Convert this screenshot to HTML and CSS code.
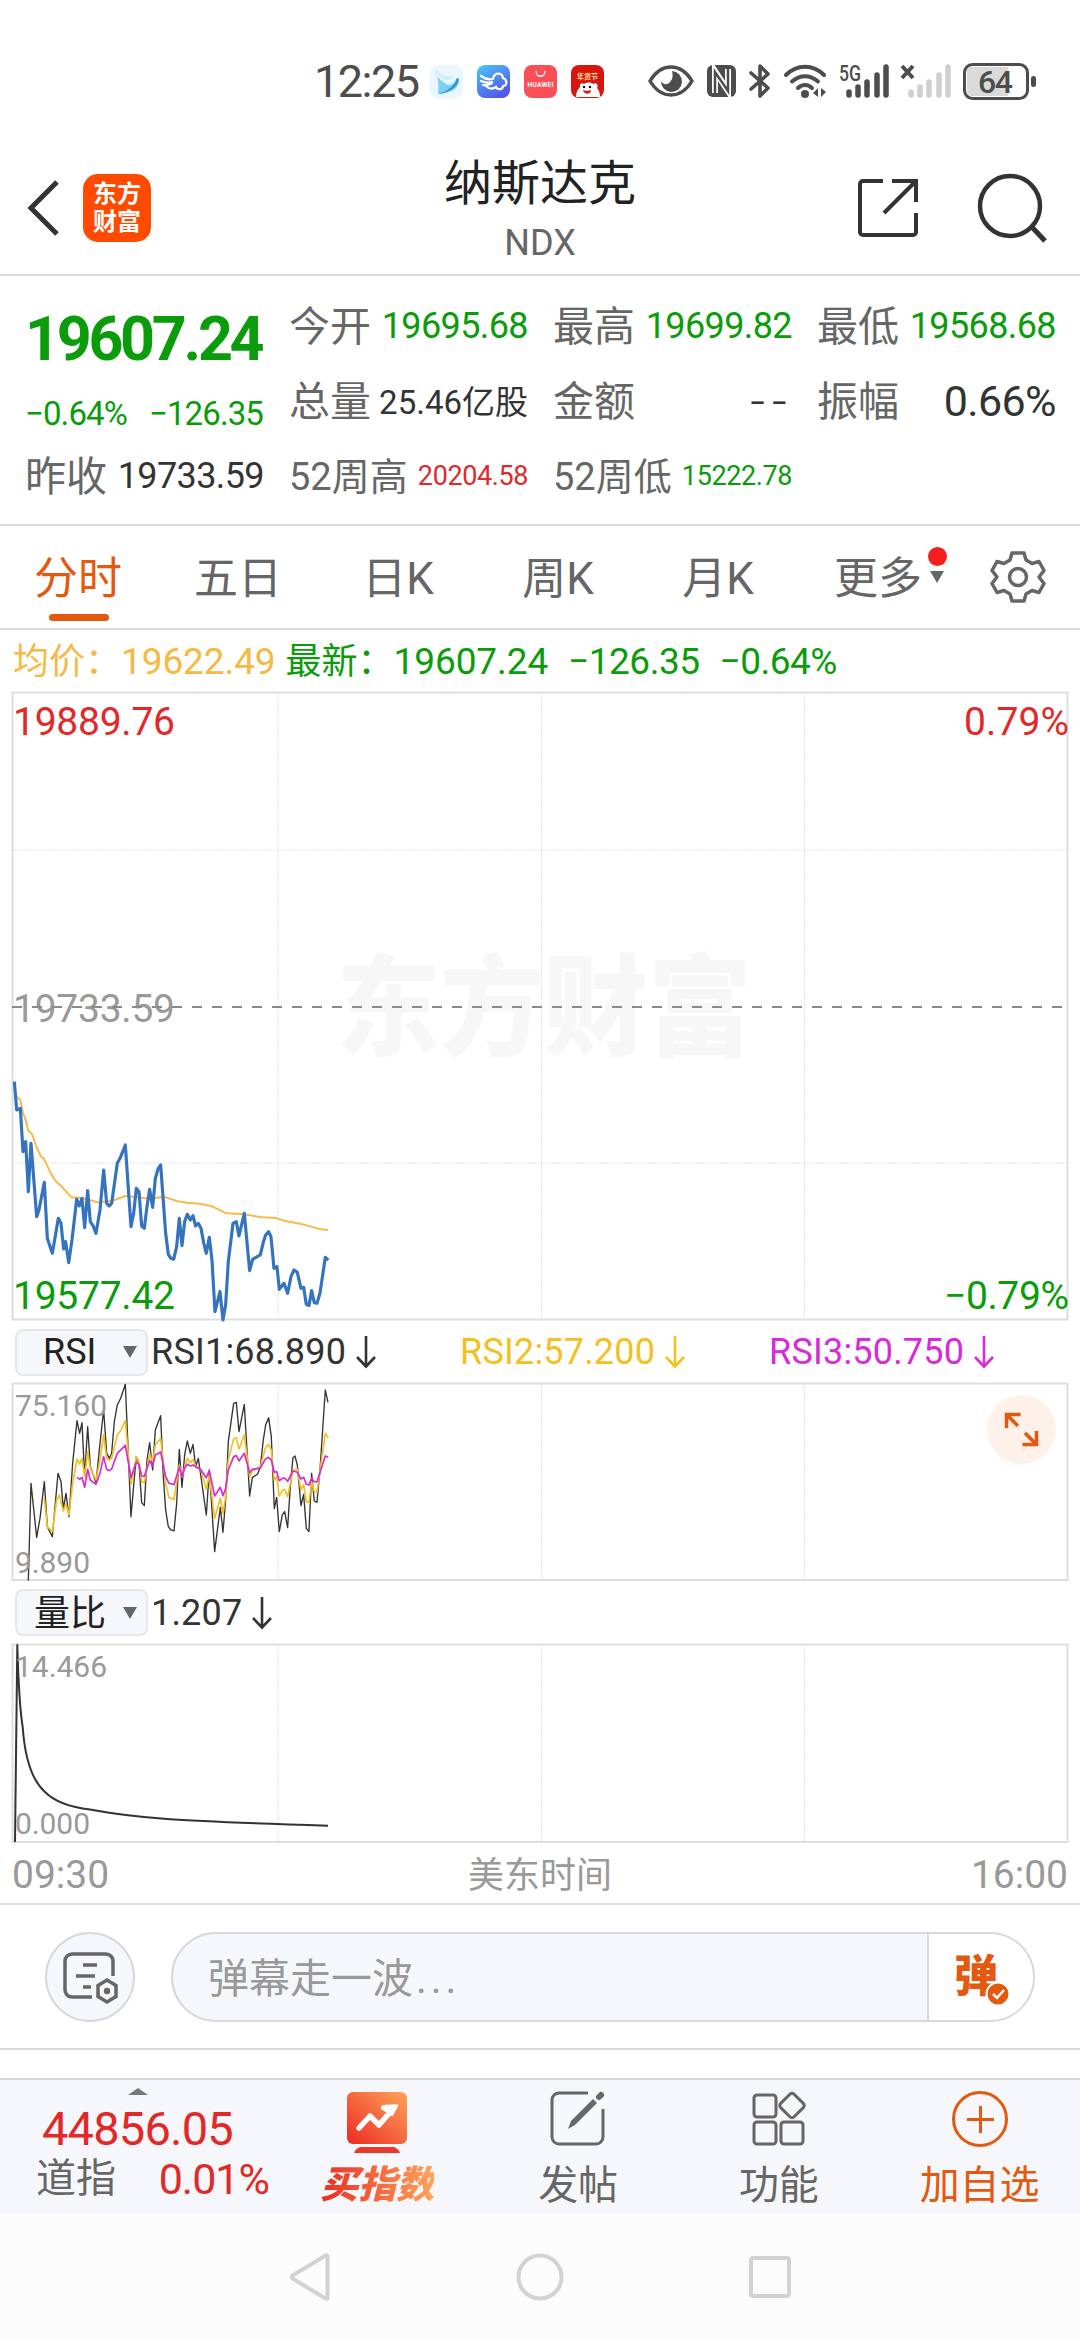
FILE: index.html
```html
<!DOCTYPE html>
<html lang="zh-CN">
<head>
  <meta charset="UTF-8" />
  <meta name="viewport" content="width=device-width, initial-scale=1.0" />
  <title>纳斯达克 NDX</title>
  <link rel="stylesheet" href="styles.css">
</head>
<body>
  <div class="statusbar">
    <span class="clock">12:25</span>
    <div class="notices">
      <svg width="33" height="33" viewBox="0 0 33 33"><rect width="33" height="33" rx="8" fill="#eaf7fe"/><path d="M6 4c0 6 2 9 6 12 5 3 12 2 17-2 1 9-7 14-21 15 1-9 0-17-2-25z" fill="#7bd0f6"/><path d="M6 4c5 7 12 9 18 6-3 7-13 8-18-6z" fill="#c9effd"/><path d="M29 13c-1 9-9 15-21 16 10-3 16-8 18-15z" fill="#2f95dc"/><path d="M12 15c4 4 10 4 14 0-2 6-10 7-14 0z" fill="#eaf7fe"/></svg>
      <svg width="33" height="33" viewBox="0 0 33 33"><defs><linearGradient id="gCloud" x1="0" y1="0" x2=".6" y2="1"><stop offset="0" stop-color="#4cc8fb"/><stop offset="1" stop-color="#5257ea"/></linearGradient></defs><rect width="33" height="33" rx="8" fill="url(#gCloud)"/><path d="M4 11c4 3 8 4 12 3m-12 2c4 2 7 2 11 1M6 20c4 1 6 0 9-2M16 14c1-7 9-7 10-1 5 2 4 8 0 8 0 4-6 4-7 1-3 2-7 2-10-1" fill="none" stroke="#fff" stroke-width="2.2" stroke-linecap="round"/></svg>
      <svg width="33" height="33" viewBox="0 0 66 66"><rect width="66" height="66" rx="16" fill="#fb4f57"/><path d="M24 12c0 14 18 14 18 0" fill="none" stroke="#fff" stroke-width="2.6"/><text x="7" y="43" class="hw" textLength="52">HUAWEI</text></svg>
      <svg width="33" height="33" viewBox="0 0 66 66"><rect width="66" height="66" rx="16" fill="#d9150f"/><text x="12" y="28" class="ny">年货节</text><g transform="scale(2)"><path d="M5 32c0-5 2-8 4-10-1-3 2-5 4-3 3-2 7-2 9 0 3-2 6 1 4 4 2 2 3 5 3 9z" fill="#fff"/><path d="M12 25c2 1 6 1 8 0 0 5-7 5-8 0z" fill="#d9150f"/><circle cx="13" cy="22" r="1.2"/><circle cx="19" cy="22" r="1.2"/></g></svg>
    </div>
    <div class="signals">
      <svg width="46" height="34" viewBox="0 0 46 34"><path d="M2 17C8 7 15 3 23 3s15 4 21 14c-6 10-13 14-21 14S8 27 2 17z" fill="none" stroke="#4d4d4d" stroke-width="3.4"/><path d="M24 7a10.500 10.500 0 1 1-11 10c2 4 7 4 9 1 3-3 3-7 2-11z" fill="#4d4d4d"/></svg>
      <svg width="31" height="34" viewBox="0 0 31 34"><rect x="1" y="1" width="29" height="32" rx="6" fill="#4d4d4d"/><path d="M9 29V7l13 20V5" fill="none" stroke="#fff" stroke-width="6"/><path d="M9 33V8l13 19V1" fill="none" stroke="#4d4d4d" stroke-width="2.500"/></svg>
      <svg width="22" height="34" viewBox="0 0 22 34"><path d="M2 9l17 15-8 8V2l8 8L2 25" fill="none" stroke="#4d4d4d" stroke-width="3.600" stroke-linejoin="round" stroke-linecap="round"/></svg>
      <svg width="44" height="34" viewBox="0 0 44 34"><g fill="none" stroke="#4d4d4d" stroke-width="4" stroke-linecap="round"><path d="M3 11c11-11 27-11 38 0"/><path d="M9 17.500c8-7 18-7 26 0"/><path d="M15 24c4-4 10-4 14 0"/></g><circle cx="22" cy="30" r="4" fill="#4d4d4d"/><path d="M35 24v9l-5-4zM38 24v9l5-5z" fill="#4d4d4d"/></svg>
      <svg width="50" height="34" viewBox="0 0 50 34"><text x="0" y="17" class="net" textLength="22" lengthAdjust="spacingAndGlyphs">5G</text><g stroke="#4d4d4d" stroke-width="5.500" stroke-linecap="round"><path d="M10 28v3M19 23v8M28 18v13M38 11v20M47 3v28"/></g></svg>
      <svg width="50" height="34" viewBox="0 0 50 34"><path d="M1 2l11 12M12 2L1 14" stroke="#4d4d4d" stroke-width="4"/><g stroke="#cfcfcf" stroke-width="5.500" stroke-linecap="round"><path d="M10 28v3M19 23v8M28 18v13M38 11v20M47 3v28"/></g></svg>
      <svg width="74" height="37" viewBox="0 0 74 37"><rect x="1.500" y="1.500" width="63" height="34" rx="8" fill="#fff" stroke="#4d4d4d" stroke-width="3"/><path d="M9 4h36v29H9q-5 0-5-5V9q0-5 5-5z" fill="#dadada"/><rect x="68" y="13" width="5" height="11" rx="2.500" fill="#4d4d4d"/><text x="15" y="29.500" class="batt" textLength="35">64</text></svg>
    </div>
  </div>

  <header class="header">
    <div class="header-left">
      <svg width="32" height="56" viewBox="0 0 32 56"><path d="M30 2L4 28l26 26" fill="none" stroke="#333" stroke-width="5"/></svg>
      <div class="logo"><span>东方</span><span>财富</span></div>
    </div>
    <div class="header-title">
      <h1>纳斯达克</h1>
      <p>NDX</p>
    </div>
    <div class="header-right">
      <svg width="60" height="60" viewBox="0 0 60 60"><path d="M25 3H5a3 3 0 0 0-3 3v48a3 3 0 0 0 3 3h50a3 3 0 0 0 3-3V35M34 3h24v21M57 4L26 35" fill="none" stroke="#333" stroke-width="4"/></svg>
      <svg width="70" height="70" viewBox="0 0 70 70"><circle cx="32" cy="33" r="30" fill="none" stroke="#333" stroke-width="4.500"/><path d="M53 53l14 15" stroke="#333" stroke-width="5"/></svg>
    </div>
  </header>

  <section class="quote">
    <div class="price green">19607.24</div>
    <div class="cell"><label>今开</label><b class="green">19695.68</b></div>
    <div class="cell"><label>最高</label><b class="green">19699.82</b></div>
    <div class="cell"><label>最低</label><b class="green">19568.68</b></div>
    <div class="cell change green"><span>−0.64%</span><span>−126.35</span></div>
    <div class="cell"><label>总量</label><b class="vol">25.46亿股</b></div>
    <div class="cell"><label>金额</label><b class="none">--</b></div>
    <div class="cell"><label>振幅</label><b class="big">0.66%</b></div>
    <div class="cell"><label>昨收</label><b>19733.59</b></div>
    <div class="cell"><label class="wide">52周高</label><b class="small red">20204.58</b></div>
    <div class="cell"><label class="wide">52周低</label><b class="small green">15222.78</b></div>
  </section>

  <nav class="tabs">
    <a class="tab active">分时</a>
    <a class="tab">五日</a>
    <a class="tab">日K</a>
    <a class="tab">周K</a>
    <a class="tab">月K</a>
    <a class="tab more">更多<i class="dot"></i><i class="arrow"></i></a>
    <svg class="gear" width="54" height="54" viewBox="0 0 54 54"><path d="M21 3h12l2 7 6 3.500 7-2 5 9-5 6.500 5 6.500-5 9-7-2-6 3.500-2 7H21l-2-7-6-3.500-7 2-5-9L6 27l-5-6.500 5-9 7 2L19 10z" fill="none" stroke="#666" stroke-width="3.500" stroke-linejoin="round"/><circle cx="27" cy="27" r="8.500" fill="none" stroke="#666" stroke-width="3.500"/></svg>
  </nav>

  <div class="summary">
    <span class="avg">均价：<em>19622.49</em></span>
    <span class="green">最新：<em>19607.24</em><em>−126.35</em><em>−0.64%</em></span>
  </div>

  <!-- minute chart -->
  <svg class="chart" width="1080" height="629" viewBox="0 692 1080 629">
    <text x="336" y="1047" class="watermark" textLength="416" lengthAdjust="spacingAndGlyphs">东方财富</text>
    <path class="grid" d="M278 692v628M541.500 692v628M804.500 692v628M12 850h1056M12 1163h1056"/>
    <rect class="frame" x="12.500" y="692.500" width="1055" height="627"/>
    <text x="13" y="735" class="axis red" textLength="162">19889.76</text>
    <text x="1069" y="735" class="axis red end" textLength="105">0.79%</text>
    <text x="13" y="1022" class="axis gray" textLength="162">19733.59</text>
    <path class="mid" d="M12 1007h1056"/>
    <text x="13" y="1309" class="axis green" textLength="162">19577.42</text>
    <text x="1069" y="1309" class="axis green end" textLength="125">−0.79%</text>
    <g transform="translate(0 1060) scale(.3333)">
      <polyline class="line yellow" stroke-width="6" points="50,110 61,120 69,160 77,180 85,212 96,222 110,262 122,288 133,298 150,335 166,362 183,378 215,412 246,414 270,420 292,427 335,423 376,408 409,411 449,416 490,410 530,423 560,428 600,431 636,439 680,460 733,463 780,471 826,474 860,484 900,491 955,506 984,510"/>
      <polyline class="line blue" stroke-width="9.500" points="43,65 50,150 61,145 69,275 77,245 85,395 93,250 110,470 117,450 133,367 142,535 157,580 175,475 183,490 191,567 197,545 206,608 216,540 230,418 238,438 246,415 254,503 263,392 271,485 279,497 288,520 300,450 311,330 320,430 328,438 335,430 352,310 360,295 376,255 393,500 401,460 409,385 417,395 425,498 433,505 441,440 449,388 458,442 466,355 475,325 482,315 497,520 505,583 513,595 521,598 530,560 538,475 546,557 554,485 562,463 571,480 579,467 587,498 595,490 603,505 611,548 619,580 628,532 636,600 645,755 660,695 669,780 677,735 685,605 699,490 709,485 717,528 733,460 749,632 758,598 781,585 790,547 797,525 806,515 813,530 822,625 831,620 838,688 852,670 863,700 873,650 882,630 892,637 903,685 911,682 919,733 927,737 935,692 943,728 951,730 960,700 976,592 985,600"/>
    </g>
  </svg>

  <div class="indicator">
    <button class="picker">RSI<i class="arrow"></i></button>
    <span class="ind-value dark">RSI1:68.890<svg width="22" height="34" viewBox="0 0 22 34"><path d="M11 1v30M2 22l9 9.500 9-9.500"/></svg></span>
    <span class="ind-value gold">RSI2:57.200<svg width="22" height="34" viewBox="0 0 22 34"><path d="M11 1v30M2 22l9 9.500 9-9.500"/></svg></span>
    <span class="ind-value magenta">RSI3:50.750<svg width="22" height="34" viewBox="0 0 22 34"><path d="M11 1v30M2 22l9 9.500 9-9.500"/></svg></span>
  </div>

  <!-- RSI chart -->
  <svg class="chart" width="1080" height="198" viewBox="0 1383 1080 198">
    <path class="grid" d="M278 1383v197M541.500 1383v197M804.500 1383v197"/>
    <rect class="frame" x="12.500" y="1383.500" width="1055" height="196.500"/>
    <g transform="translate(0 1310) scale(.3333)">
      <polyline class="line black" stroke-width="4" points="85,812 93,520 110,682 120,625 133,515 142,650 157,680 174,490 183,515 190,597 198,550 207,620 218,460 231,332 239,370 246,338 254,500 263,350 271,470 288,518 300,400 311,300 320,430 328,445 335,430 343,335 352,285 362,265 376,223 393,620 403,505 409,440 417,460 425,578 433,587 441,450 449,398 458,480 466,360 482,317 490,500 497,600 505,650 513,660 522,663 530,580 538,418 546,532 554,435 562,393 571,430 579,403 587,470 595,445 603,500 619,615 628,480 636,600 644,725 661,592 669,667 677,570 685,395 701,280 709,277 717,365 733,283 741,420 749,558 757,503 773,492 781,470 790,390 797,345 806,323 814,380 823,596 830,562 838,665 847,615 854,605 863,653 871,530 879,443 885,438 892,465 903,587 911,553 919,655 927,665 935,490 943,573 951,577 960,480 976,240 984,277"/>
      <polyline class="line rsi2" stroke-width="5" points="133,565 142,650 157,665 170,570 178,556 190,603 198,582 207,615 218,520 231,447 239,462 246,445 254,500 263,425 271,475 288,510 300,450 311,374 320,445 328,450 335,445 352,375 362,362 376,332 393,523 409,440 417,455 425,515 433,518 449,432 458,455 466,405 482,385 497,520 507,563 522,568 538,465 546,500 562,445 571,458 579,448 587,468 603,480 619,537 628,495 644,625 661,565 669,610 677,560 685,450 701,387 709,383 717,417 733,375 749,500 757,483 781,470 797,412 806,403 814,420 823,510 830,500 838,558 847,541 854,538 863,560 879,480 892,478 903,540 911,523 919,575 927,577 935,515 943,545 951,547 976,370 985,383"/>
      <polyline class="line rsi3" stroke-width="5" points="231,502 239,508 246,502 254,532 263,478 271,510 288,523 300,490 311,440 320,478 328,482 335,477 352,430 376,406 393,503 409,457 417,463 425,498 433,499 449,452 458,468 466,435 482,426 497,500 507,520 522,524 538,472 546,500 554,475 562,463 571,468 579,465 595,475 603,480 619,503 628,482 644,558 661,532 669,557 677,535 685,480 701,440 709,437 717,453 733,430 749,488 757,478 781,474 797,446 806,442 814,450 823,487 830,485 838,512 847,505 854,504 863,514 879,483 892,487 903,507 911,502 919,523 927,525 935,504 943,515 951,516 976,438 985,442"/>
    </g>
    <text x="15" y="1416" class="axis-s" textLength="92">75.160</text>
    <text x="15" y="1573" class="axis-s" textLength="75">9.890</text>
    <circle cx="1021.500" cy="1429.500" r="34.500" fill="#fef1ea"/>
    <path d="M1006.500 1428v-13.500h14M1007 1415l11 11M1022.500 1444.500h14V1431M1036 1444l-11-11" fill="none" stroke="#e2590f" stroke-width="3.500"/>
  </svg>

  <div class="indicator short">
    <button class="picker cn"><span>量比</span><i class="arrow"></i></button>
    <span class="ind-value dark">1.207<svg width="22" height="34" viewBox="0 0 22 34"><path d="M11 1v30M2 22l9 9.500 9-9.500"/></svg></span>
  </div>

  <!-- volume ratio chart -->
  <svg class="chart" width="1080" height="199" viewBox="0 1644 1080 199">
    <path class="grid" d="M278 1644v198M541.500 1644v198M804.500 1644v198"/>
    <rect class="frame" x="12.500" y="1644.500" width="1055" height="197.500"/>
    <path class="line black" stroke-width="2" d="M15 1842L17.300 1645Q19 1705 22.700 1727Q26 1775 45 1792Q59 1806 90 1809.500Q125 1816 167 1819T328 1825.700"/>
    <text x="15" y="1677" class="axis-s" textLength="92">14.466</text>
    <text x="15" y="1834" class="axis-s" textLength="75">0.000</text>
  </svg>

  <div class="times">
    <span>09:30</span>
    <span class="zone">美东时间</span>
    <span>16:00</span>
  </div>

  <div class="danmu">
    <button class="danmu-set">
      <svg width="56" height="54" viewBox="0 0 56 54"><path d="M29 45H9a7 7 0 0 1-7-7V9a7 7 0 0 1 7-7h34a7 7 0 0 1 7 7v15M20 13h14M13 24h19M20 35h8" fill="none" stroke="#666" stroke-width="3.500"/><path d="M44 28l9 5.500v11L44 50l-9-5.500v-11z" fill="none" stroke="#666" stroke-width="3.500"/><circle cx="44" cy="39" r="3.200" fill="#666"/></svg>
    </button>
    <div class="danmu-box">
      <span class="danmu-hint">弹幕走一波<i>...</i></span>
      <div class="danmu-switch">弹<svg class="check" width="26" height="26" viewBox="0 0 26 26"><circle cx="13" cy="13" r="11.500" fill="#e2590f" stroke="#fff" stroke-width="2"/><path d="M8 13l4 4 7-8" fill="none" stroke="#fff" stroke-width="2.500"/></svg></div>
    </div>
  </div>

  <footer class="bottom">
    <div class="index">
      <i class="up"></i>
      <div class="index-value red">44856.05</div>
      <div class="index-row"><span>道指</span><b class="red">0.01%</b></div>
    </div>
    <a class="action buy">
      <svg width="60" height="62" viewBox="0 0 60 62"><defs><linearGradient id="gBuy" x1="0" y1="1" x2="1" y2="0"><stop offset="0" stop-color="#ec2a22"/><stop offset="1" stop-color="#ffa45a"/></linearGradient></defs><rect width="60" height="52" rx="6" fill="url(#gBuy)"/><path d="M13 55h34q5 2 6 6H7q1-4 6-6z" fill="#e8392b"/><path d="M12 36l11-12 9 9 13-15" fill="none" stroke="#fff" stroke-width="5.500" stroke-linecap="round" stroke-linejoin="round"/><path d="M35 16q0-2 3-2l12-.5-5 9.500z" fill="#fff" stroke="#fff" stroke-width="2.500" stroke-linejoin="round"/></svg>
      <span>买指数</span>
    </a>
    <a class="action">
      <svg width="56" height="56" viewBox="0 0 56 56"><path d="M38 2H9a7 7 0 0 0-7 7v37a7 7 0 0 0 7 7h37a7 7 0 0 0 7-7V18" fill="none" stroke="#666" stroke-width="3"/><path d="M43 8l4 4-22 22-7 4 3-8z" fill="#666"/><path d="M49 6l2-2" stroke="#666" stroke-width="6" stroke-linecap="round"/></svg>
      <span>发帖</span>
    </a>
    <a class="action">
      <svg width="54" height="56" viewBox="0 0 54 56"><g fill="none" stroke="#666" stroke-width="3"><rect x="2" y="4" width="22" height="22" rx="3"/><rect x="2" y="31" width="22" height="22" rx="3"/><rect x="29" y="31" width="22" height="22" rx="3"/><rect x="30.500" y="5" width="19" height="19" rx="3" transform="rotate(45 40 14.500)"/></g></svg>
      <span>功能</span>
    </a>
    <a class="action add">
      <svg width="58" height="58" viewBox="0 0 58 58"><circle cx="29" cy="29" r="26.500" fill="none" stroke="#e2590f" stroke-width="3"/><path d="M29.500 16v27M16 29.500h27" stroke="#e2590f" stroke-width="3"/></svg>
      <span>加自选</span>
    </a>
  </footer>

  <div class="sysnav">
    <svg width="42" height="50" viewBox="0 0 42 50"><path d="M38.500 4.500v41q0 2-2 1L3.500 26.500q-1.500-1.500 0-3L36.500 3.500q2-1 2 1z" fill="none" stroke="#d2d2d2" stroke-width="4"/></svg>
    <svg width="50" height="50" viewBox="0 0 50 50"><circle cx="25" cy="25" r="21.500" fill="none" stroke="#d2d2d2" stroke-width="4"/></svg>
    <svg width="42" height="50" viewBox="0 0 42 50"><rect x="2" y="6" width="38" height="38" rx="2" fill="none" stroke="#d2d2d2" stroke-width="4"/></svg>
  </div>
</body>
</html>
```

FILE: styles.css
```css
* { box-sizing: border-box; }
body { margin: 0; width: 1080px; height: 2340px; overflow: hidden; background: #fff; color: #333; font-family: Roboto, "Noto Sans CJK SC", sans-serif; }
svg { display: block; flex: none; overflow: visible; }
h1, p { margin: 0; font-weight: 400; }
b, em, i { font-weight: 400; font-style: normal; }
button { padding: 0; font-family: inherit; }
.green { color: #0a9c0a; fill: #0a9c0a; }
.red { color: #e22828; fill: #e22828; }

.statusbar { display: flex; align-items: center; height: 130px; padding: 32px 0 0 314px; color: #4d4d4d; }
.clock { width: 116px; font-size: 45px; letter-spacing: -1.5px; }
.notices { display: flex; gap: 14px; width: 218px; }
.signals { display: flex; align-items: center; gap: 12px; }
.hw { font-size: 13px; font-weight: 700; fill: #fff; }
.ny { font-size: 14px; font-weight: 700; fill: #ffe2a0; }
.net { font-size: 22px; font-weight: 500; fill: #4d4d4d; }
.batt { font-size: 32px; font-weight: 500; fill: #4d4d4d; }

.header { display: grid; grid-template-columns: 1fr auto 1fr; align-items: center; height: 146px; padding: 12px 32px 0 27px; border-bottom: 2px solid #d9dadd; }
.header-left { display: flex; align-items: center; gap: 24px; }
.logo { display: flex; flex-direction: column; justify-content: center; width: 68px; height: 68px; border-radius: 15px; background: #ff4a00; color: #fff; font-size: 24px; font-weight: 700; line-height: 28px; text-align: center; }
.header-title { padding: 4px 0 0 5px; text-align: center; }
.header-title h1 { font-size: 48px; line-height: 64px; color: #222; }
.header-title p { margin-top: 2px; font-size: 36px; line-height: 50px; color: #666; }
.header-right { display: flex; align-items: center; justify-content: flex-end; gap: 60px; }

.quote { display: grid; grid-template-columns: repeat(4, 238px); grid-template-rows: 75px 75px 75px; column-gap: 26px; height: 250px; padding: 12px 25px 0; border-bottom: 2px solid #d9dadd; }
.quote .price { display: flex; align-items: center; padding-top: 27px; font-size: 61px; font-weight: 700; letter-spacing: -3.3px; }
.cell { display: flex; align-items: center; justify-content: space-between; white-space: nowrap; }
.cell label { margin-top: -5px; font-size: 41px; color: #666; }
.cell label.wide { font-size: 38px; }
.cell b { margin-right: -1px; font-size: 36px; letter-spacing: -.6px; }
.cell b.vol { margin-top: -2px; font-size: 33px; letter-spacing: 0; }
.cell b.big { font-size: 43px; }
.cell b.none { margin: 2px -3px 0 0; font-size: 52px; font-weight: 300; letter-spacing: 7px; }
.cell b.small { font-size: 27px; letter-spacing: -.4px; }
.change { padding-top: 25px; font-size: 33px; letter-spacing: -.9px; }

.tabs { display: flex; align-items: center; height: 104px; border-bottom: 2px solid #d9dadd; color: #666; font-size: 44px; }
.tab { position: relative; display: flex; align-items: center; justify-content: center; width: 160px; height: 100%; padding: 0 4px 4px 0; }
.tab.active { color: #e2590f; }
.tab.active::after { content: ""; position: absolute; left: 50%; bottom: 7px; width: 60px; height: 7px; margin-left: -31px; border-radius: 4px; background: #e2590f; }
.arrow { width: 0; height: 0; border: 7px solid transparent; border-top: 12px solid #666; border-bottom: 0; }
.more .dot { position: absolute; left: 128px; top: 21px; width: 19px; height: 19px; border-radius: 50%; background: #f4201f; }
.more .arrow { position: absolute; left: 130px; top: 45px; }
.gear { margin-left: 31px; }

.summary { display: flex; align-items: center; gap: 10px; height: 62px; padding: 0 0 6px 13px; font-size: 36px; white-space: nowrap; }
.summary em { font-size: 37px; letter-spacing: -.1px; }
.summary em + em { margin-left: 20px; letter-spacing: -.5px; }
.avg { color: #f6b944; }

.chart { font-size: 40px; }
.grid { fill: none; stroke: #e2e2e2; stroke-width: 1; stroke-dasharray: 2 1; }
.frame { fill: none; stroke: #dedede; stroke-width: 2; }
.mid { stroke: #8a8a8a; stroke-width: 2; stroke-dasharray: 10 10; }
.watermark { font-size: 110px; font-weight: 900; fill: #f7f7f7; }
.axis { font-size: 39px; }
.axis.gray { fill: #999; }
.axis.end { text-anchor: end; }
.axis-s { font-size: 30px; fill: #999; }
.line { fill: none; stroke-linejoin: round; }
.blue { stroke: #3474be; }
.yellow { stroke: #f6bb4c; }
.black { stroke: #333; }
.rsi2 { stroke: #f2c120; }
.rsi3 { stroke: #d92ad9; }

.indicator { display: flex; align-items: center; height: 62px; padding: 0 0 0 15px; font-size: 36px; }
.indicator.short { height: 63px; }
.picker { display: flex; align-items: center; justify-content: space-between; width: 133px; height: 47px; margin-right: 3px; padding: 0 9px 0 26px; border: 2px solid #e6e7ea; border-radius: 8px; background: #f6f7fa; color: #222; font-size: 36px; }
.picker.cn { padding-left: 17px; }
.picker.cn span { margin-top: -5px; }
.ind-value { display: flex; align-items: center; gap: 9px; width: 309px; letter-spacing: .2px; white-space: nowrap; }
.ind-value path { fill: none; stroke: currentColor; stroke-width: 2.6; }
.gold { color: #f2c120; }
.magenta { color: #d92ad9; }

.times { display: grid; grid-template-columns: 1fr auto 1fr; align-items: center; height: 62px; padding: 4px 12px 0; border-bottom: 2px solid #d9dadd; color: #999; font-size: 39px; }
.times .zone { margin-top: -6px; font-size: 36px; }
.times span:last-child { text-align: right; }

.danmu { display: flex; align-items: center; gap: 36px; height: 145px; padding: 0 45px; border-bottom: 2px solid #d9dadd; }
.danmu-set { display: flex; align-items: center; justify-content: center; width: 90px; height: 90px; padding: 4px 0 0 2px; border: 2px solid #d6d8de; border-radius: 50%; background: #f6f7fa; }
.danmu-box { display: flex; width: 864px; height: 90px; border: 2px solid #d6d8de; border-radius: 45px; background: #f6f7fa; overflow: hidden; }
.danmu-hint { flex: 1; padding: 1px 0 0 35px; line-height: 88px; font-size: 41px; color: #999; }
.danmu-hint i { margin-left: 3px; letter-spacing: 4px; }
.danmu-switch { position: relative; width: 106px; padding-left: 25px; border-left: 2px solid #d6d8de; background: #fff; color: #e2590f; font-size: 44px; font-weight: 900; line-height: 87px; }
.check { position: absolute; left: 56px; top: 47px; }

.bottom { display: flex; height: 136px; margin-top: 28px; border-top: 2px solid #d4d6da; background: #f6f7fa; color: #666; }
.index { display: flex; flex-direction: column; width: 277px; padding: 8px 8px 0 36px; }
.up { width: 0; height: 0; margin-left: 92px; border: 10px solid transparent; border-bottom: 7px solid #777; border-top: 0; }
.index-value { margin-top: 5px; padding-left: 6px; font-size: 47px; line-height: 58px; letter-spacing: -.8px; }
.index-row { display: flex; align-items: center; justify-content: space-between; margin-top: -2px; font-size: 40px; line-height: 46px; }
.index-row b { font-size: 43px; letter-spacing: -1px; }
.action { display: flex; flex: 1; flex-direction: column; align-items: center; padding-top: 10px; font-size: 40px; line-height: 60px; }
.action svg { height: 58px; }
.action span { margin-top: 8px; }
.add { color: #e2590f; }
.buy svg { margin-top: 2px; height: 62px; }
.buy span { margin-top: 1px; font-size: 38px; font-weight: 900; font-style: italic; background: linear-gradient(90deg, #ec2a22, #ffa45a); -webkit-background-clip: text; background-clip: text; color: transparent; }

.sysnav { display: flex; justify-content: center; gap: 184px; height: 126px; padding-top: 38px; background: #fcfcfc; }
```
